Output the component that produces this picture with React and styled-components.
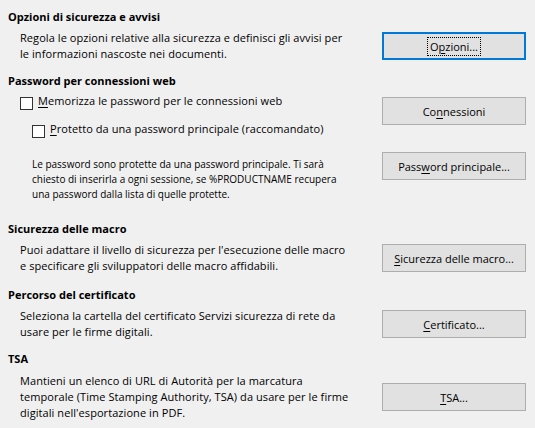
import React from "react";
import styled, { createGlobalStyle } from "styled-components";

const GlobalStyle = createGlobalStyle`
  body {
    margin: 0;
    background: #f0f0f0;
    font-family: "Open Sans", "Noto Sans", sans-serif;
    font-size: 11px;
    color: #000;
  }
`;

const Page = styled.div`
  padding: 9px 9px 0 8px;
`;

const Section = styled.section`
  margin-top: ${(p) => p.$top || 0}px;
`;

const Heading = styled.h2`
  margin: 0;
  font-size: 11px;
  font-weight: 700;
  line-height: 16px;
`;

// description + button on the right
const Row = styled.div`
  display: grid;
  grid-template-columns: 1fr 144px;
  align-items: center;
  margin-top: ${(p) => p.$gap || 5}px;
  padding-left: 12px;
`;

const Desc = styled.p`
  margin: 0;
  line-height: 16px;
  letter-spacing: 0.07px;
`;

const Button = styled.button`
  box-sizing: border-box;
  width: 144px;
  height: 28px;
  margin-top: ${(p) => p.$top || 0}px;
  padding: 0;
  background: #e1e1e1;
  border: ${(p) => (p.$focused ? "2px solid #0078d7" : "1px solid #adadad")};
  font-family: inherit;
  font-size: 11px;
  color: #000;
`;

const Focus = styled.span`
  outline: 1px dotted #000;
  outline-offset: 1px;
  padding: 0 1px;
`;

const Key = styled.u`
  text-underline-offset: 2px;
`;

const PasswordGrid = styled.div`
  display: grid;
  grid-template-columns: 1fr 144px;
  align-items: start;
  margin-top: 4px;
`;

const Column = styled.div`
  display: flex;
  flex-direction: column;
`;

const CheckRow = styled.label`
  display: flex;
  align-items: flex-start;
  gap: 5px;
  line-height: 16px;
  letter-spacing: 0.07px;
  margin-top: ${(p) => p.$top || 0}px;
  padding-left: ${(p) => p.$indent}px;
`;

const Box = styled.span`
  box-sizing: border-box;
  width: 13px;
  height: 13px;
  margin-top: 4px;
  background: #fff;
  border: 1px solid #333;
  flex-shrink: 0;
`;

const Note = styled.p`
  margin: 19px 0 0 24px;
  font-size: 10px;
  line-height: 15px;
`;

export default function App() {
  return (
    <>
      <GlobalStyle />
      <Page>
        <Section>
          <Heading>Opzioni di sicurezza e avvisi</Heading>
          <Row>
            <Desc>
              Regola le opzioni relative alla sicurezza e definisci gli avvisi per
              <br />
              le informazioni nascoste nei documenti.
            </Desc>
            <Button $focused>
              <Focus>
                O<Key>p</Key>zioni...
              </Focus>
            </Button>
          </Row>
        </Section>

        <Section $top={11}>
          <Heading>Password per connessioni web</Heading>
          <PasswordGrid>
            <Column>
              <CheckRow $indent={12}>
                <Box />
                <span>
                  <Key>M</Key>emorizza le password per le connessioni web
                </span>
              </CheckRow>
              <CheckRow $indent={24} $top={11}>
                <Box />
                <span>
                  <Key>P</Key>rotetto da una password principale (raccomandato)
                </span>
              </CheckRow>
              <Note>
                Le password sono protette da una password principale. Ti sarà
                <br />
                chiesto di inserirla a ogni sessione, se %PRODUCTNAME recupera
                <br />
                una password dalla lista di quelle protette.
              </Note>
            </Column>
            <Column>
              <Button $top={4}>
                Co<Key>n</Key>nessioni
              </Button>
              <Button $top={27}>
                Pass<Key>w</Key>ord principale...
              </Button>
            </Column>
          </PasswordGrid>
        </Section>

        <Section $top={19}>
          <Heading>Sicurezza delle macro</Heading>
          <Row>
            <Desc>
              Puoi adattare il livello di sicurezza per l'esecuzione delle macro
              <br />e specificare gli sviluppatori delle macro affidabili.
            </Desc>
            <Button>
              <Key>S</Key>icurezza delle macro...
            </Button>
          </Row>
        </Section>

        <Section $top={13}>
          <Heading>Percorso del certificato</Heading>
          <Row>
            <Desc>
              Seleziona la cartella del certificato Servizi sicurezza di rete da
              <br />
              usare per le firme digitali.
            </Desc>
            <Button>
              <Key>C</Key>ertificato...
            </Button>
          </Row>
        </Section>

        <Section $top={11}>
          <Heading>TSA</Heading>
          <Row $gap={6}>
            <Desc>
              Mantieni un elenco di URL di Autorità per la marcatura
              <br />
              temporale (Time Stamping Authority, TSA) da usare per le firme
              <br />
              digitali nell'esportazione in PDF.
            </Desc>
            <Button>
              <Key>T</Key>SA...
            </Button>
          </Row>
        </Section>
      </Page>
    </>
  );
}
